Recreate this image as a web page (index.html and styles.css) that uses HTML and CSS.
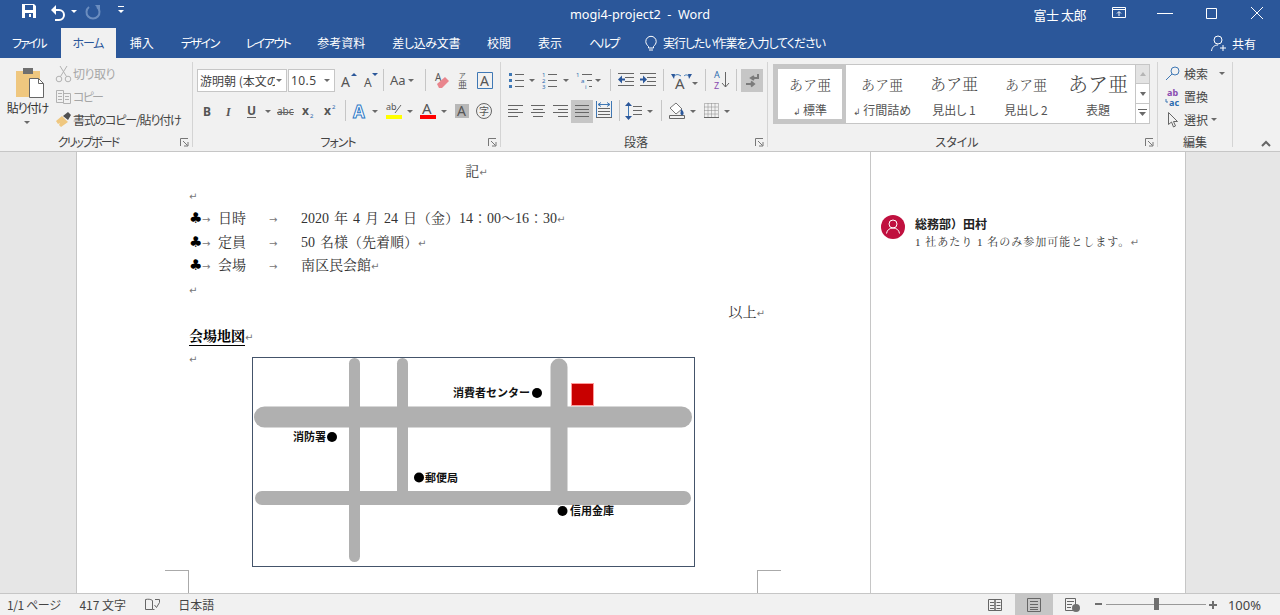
FILE: index.html
```html
<!DOCTYPE html>
<html lang="ja">
<head>
<meta charset="utf-8">
<title>mogi4-project2 - Word</title>
<link rel="stylesheet" href="styles.css">
</head>
<body>
<div class="app">
  <header class="titlebar">
    <div class="qat">
      <svg width="26" height="28"><path class="w-fill" d="M6 5h12l2 2v12H6z"/><rect class="blue-fill" x="9" y="6" width="8" height="5"/><rect class="blue-fill" x="9" y="14" width="8" height="5"/><rect class="w-fill" x="13" y="15" width="2" height="3"/></svg>
      <svg width="38" height="28"><path class="w-line thick" d="M11 11h6a4.500 4.500 0 0 1 0 10h-4"/><path class="w-fill" d="M9 11l5-5v10z"/><path class="w-fill" d="M29 11h6l-3 3z"/></svg>
      <svg width="32" height="28"><path class="dim-line thick" d="M9 8a6.500 6.500 0 1 0 8 0"/><path class="dim-fill" d="M20 6v6l-5-6z"/></svg>
      <svg width="18" height="28"><path class="w-line" d="M6 7.500h6"/><path class="w-fill" d="M6 11h6l-3 3z"/></svg>
    </div>
    <div class="doc-title">mogi4-project2&nbsp; -&nbsp; Word</div>
    <div class="winctl">
      <span class="user">富士 太郎</span>
      <span class="winbtn"><svg width="14" height="12"><path class="w-line" d="M.5.500h13v10H.5zM.5 2.500h13M7 9V5M5 6.500l2-2 2 2"/></svg></span>
      <span class="winbtn"><svg width="16" height="12"><path class="w-line" d="M0 6.500h16"/></svg></span>
      <span class="winbtn"><svg width="12" height="12"><path class="w-line" d="M1.500 1.500h10v10h-10z"/></svg></span>
      <span class="winbtn"><svg width="14" height="14"><path class="w-line" d="M1 1l12 12M13 1L1 13"/></svg></span>
    </div>
  </header>

  <nav class="tabs">
    <span class="tab first k20">ファイル</span>
    <span class="tab active k12">ホーム</span>
    <span class="tab">挿入</span>
    <span class="tab k15">デザイン</span>
    <span class="tab k16">レイアウト</span>
    <span class="tab">参考資料</span>
    <span class="tab k03">差し込み文書</span>
    <span class="tab">校閲</span>
    <span class="tab">表示</span>
    <span class="tab k17">ヘルプ</span>
    <span class="tell">
      <svg width="12" height="17"><path class="w-line" d="M3.500 11.500C2 10 .8 8.500.8 6.500a5.200 5.200 0 0 1 10.400 0c0 2-1.200 3.500-2.700 5v1.500h-5zM4 15h4"/></svg>
      <span class="k10">実行したい作業を入力してください</span>
    </span>
    <span class="share">
      <svg width="16" height="17"><circle class="w-line" cx="7" cy="5" r="4"/><path class="w-line" d="M.5 16c.5-4 3-6 6.500-6M12 10v6M9 13h6"/></svg>
      共有
    </span>
  </nav>

  <section class="ribbon">
    <div class="group g-clip">
      <div class="clip-body">
        <div class="paste">
          <svg width="30" height="31"><rect class="orange" x="1" y="4" width="24" height="26"/><rect class="grey-fill" x="8" y="1" width="10" height="6"/><path class="paper" d="M14.500 11.500h9l5 5v14h-14z"/><path class="grey-line" d="M23.500 11.500v5h5"/></svg>
          <span class="paste-label k10">貼り付け</span>
          <svg width="8" height="8"><path class="arrow" d="M1 2h6l-3 3z"/></svg>
        </div>
        <div class="stack">
          <div class="sm off"><svg width="18" height="18"><circle class="off-line" cx="4" cy="14" r="2.800"/><circle class="off-line" cx="13" cy="14" r="2.800"/><path class="off-line thick" d="M5.500 11.500L12 1M11.500 11.500L5 1"/></svg><span class="k05">切り取り</span></div>
          <div class="sm off"><svg width="18" height="18"><path class="off-line" d="M1.500 2.500h7v12h-7zM8.500 5.500h7v10h-7zM3 5.500h4M3 8.500h4M3 11.500h4M10 8.500h4M10 11.500h4"/></svg><span class="k17">コピー</span></div>
          <div class="sm"><svg width="18" height="18"><path class="orange" d="M1 10l6-5 6 6-7 5-2-2 1-2-2 1z"/><path class="dark-fill" d="M8 5l5-4 3 3-3 5z"/></svg><span class="k11">書式のコピー/貼り付け</span></div>
        </div>
      </div>
      <div class="glabel clip-label"><span class="k19">クリップボード</span><svg class="launch" width="9" height="9"><path class="launch-line" d="M.5 8V.5H8M3 3l4.500 4.500M8 4v4H4"/></svg></div>
    </div>

    <div class="group g-font">
      <div class="rows">
        <div class="row">
          <div class="combo c-name"><span class="combo-text">游明朝 (本文の</span><svg width="8" height="8"><path class="arrow" d="M1 2h6l-3 3z"/></svg></div>
          <div class="combo c-size"><span class="combo-text">10.5</span><svg width="8" height="8"><path class="arrow" d="M1 2h6l-3 3z"/></svg></div>
          <svg width="26" height="23"><text class="t-i" x="6" y="18" font-size="14">A</text><path class="blue-fill" d="M16 7l3-3 3 3z"/></svg>
          <svg width="22" height="23"><text class="t-i" x="3" y="18" font-size="12">A</text><path class="blue-fill" d="M11 4h6l-3 3z"/></svg>
          <i class="sep"></i>
          <svg width="41" height="23"><text class="t-i" x="6" y="16" font-size="13">Aa</text><path class="arrow" d="M24 10h6l-3 3z"/></svg>
          <i class="sep"></i>
          <svg width="28" height="23"><text class="t-i" x="9" y="12" font-size="10">A</text><path class="pink" d="M11 15l8-7 4 4-7 7h-3z"/></svg>
          <svg width="17" height="23"><text class="t-i" x="5" y="9" font-size="7">ア</text><text class="t-i" x="4" y="19" font-size="9">亜</text></svg>
          <svg width="28" height="23"><path class="blue-line" d="M6.500 3.500h15v16h-15z"/><text class="t-i" x="9" y="17" font-size="14">A</text></svg>
        </div>
        <div class="row r2">
          <svg width="21" height="23"><text class="t-b" x="6" y="16" font-size="12">B</text></svg>
          <svg width="22" height="23"><text class="t-it" x="8" y="16" font-size="12">I</text></svg>
          <svg width="36" height="23"><text class="t-b" x="7" y="15" font-size="12">U</text><path class="grey-line" d="M7 17.500h9"/><path class="arrow" d="M25 10h6l-3 3z"/></svg>
          <svg width="21" height="23"><text class="t-i" x="1" y="15" font-size="10">abc</text><path class="grey-line" d="M1 12.500h17"/></svg>
          <svg width="21" height="23"><text class="t-b" x="5" y="15" font-size="12">x</text><text class="t-blue" x="13" y="18" font-size="6">2</text></svg>
          <svg width="22" height="23"><text class="t-b" x="6" y="15" font-size="12">x</text><text class="t-blue" x="14" y="9" font-size="6">2</text></svg>
          <i class="gap5"></i><i class="sep"></i>
          <svg width="37" height="23"><text class="t-glow" x="7" y="18" font-size="17">A</text><path class="arrow" d="M26 10h6l-3 3z"/></svg>
          <svg width="37" height="23"><text class="t-i" x="3" y="10" font-size="9">ab</text><path class="grey-line thick" d="M12 13l6-8"/><rect class="yellow" x="3" y="15" width="16" height="4"/><path class="arrow" d="M24 10h6l-3 3z"/></svg>
          <svg width="32" height="23"><text class="t-i" x="2" y="14" font-size="15">A</text><rect class="red" x="0" y="15" width="16" height="4"/><path class="arrow" d="M21 10h6l-3 3z"/></svg>
          <svg width="21" height="23"><rect class="grey-box" x="3" y="4" width="14" height="14"/><text class="t-i" x="5" y="16" font-size="14">A</text></svg>
          <svg width="24" height="23"><circle class="grey-line" cx="11" cy="11" r="7.500"/><text class="t-i" x="6" y="15" font-size="10">字</text></svg>
        </div>
      </div>
      <div class="glabel font-label"><span class="k10">フォント</span><svg class="launch" width="9" height="9"><path class="launch-line" d="M.5 8V.5H8M3 3l4.500 4.500M8 4v4H4"/></svg></div>
    </div>

    <div class="group g-para">
      <div class="rows">
        <div class="row">
          <svg width="34" height="23"><path class="blue-dot" d="M4 4h3v3H4zM4 10h3v3H4zM4 16h3v3H4z"/><path class="grey-line" d="M10 5.500h9M10 11.500h9M10 17.500h9"/><path class="arrow" d="M24 10h6l-3 3z"/></svg>
          <svg width="34" height="23"><text class="t-blue" x="3" y="8" font-size="6">1</text><text class="t-blue" x="3" y="14" font-size="6">2</text><text class="t-blue" x="3" y="20" font-size="6">3</text><path class="grey-line" d="M9 5.500h9M9 11.500h9M9 17.500h9"/><path class="arrow" d="M24 10h6l-3 3z"/></svg>
          <svg width="33" height="23"><text class="t-blue" x="3" y="8" font-size="6">1</text><text class="t-blue" x="8" y="14" font-size="6">a</text><text class="t-blue" x="12" y="20" font-size="6">i</text><path class="grey-line" d="M9 5.500h10M14 11.500h5M16 17.500h3"/><path class="arrow" d="M22 10h6l-3 3z"/></svg>
          <i class="gap4"></i><i class="sep"></i>
          <svg width="26" height="23"><path class="grey-line" d="M7 4.500h16M14 8.500h9M14 12.500h9M7 16.500h16"/><path class="blue-fill" d="M7 10.500l4-4v3h3v2h-3v3z"/></svg>
          <svg width="26" height="23"><path class="grey-line" d="M3 4.500h16M10 8.500h9M10 12.500h9M3 16.500h16"/><path class="blue-fill" d="M10 10.500l-4-4v3H3v2h3v3z"/></svg>
          <i class="sep"></i>
          <svg width="41" height="23"><text class="t-i" x="11" y="20" font-size="15">A</text><path class="blue-line thick" d="M9 8c3-3 5-3 8-1M20 7c2-2 4-1 6 1"/><path class="blue-fill" d="M7 5l4 0-1 5zM28 5l-4 0 1 5z"/><path class="arrow" d="M28 13h6l-3 3z"/></svg>
          <i class="sep"></i>
          <svg width="30" height="23"><text class="t-blue" x="8" y="9" font-size="9">A</text><text class="t-purple" x="8" y="20" font-size="9">Z</text><path class="grey-line thick" d="M19.500 3v15M16 14l3.500 4 3.500-4"/></svg>
          <i class="sep"></i><i class="gap4"></i>
          <svg class="selected" width="22" height="23"><path class="mute-line thick" d="M17 5v4h-6M13 7l-3 2 3 2M5 15h7M10 12.500l3 2.500-3 2.500"/></svg>
        </div>
        <div class="row r2">
          <svg width="22" height="23"><path class="grey-line" d="M3 5.500h15M3 9.500h10M3 12.500h15M3 16.500h10"/></svg>
          <svg width="22" height="23"><path class="grey-line" d="M4 5.500h14M6 9.500h10M4 12.500h14M6 16.500h10"/></svg>
          <svg width="22" height="23"><path class="grey-line" d="M4 5.500h15M9 9.500h10M4 12.500h15M9 16.500h10"/></svg>
          <svg class="selected" width="22" height="23"><path class="grey-line" d="M4 5.500h14M4 9.500h14M4 12.500h14M4 16.500h14"/></svg>
          <svg width="26" height="23"><path class="blue-line" d="M3.500 1v17M18.500 1v17M5 4.500h12M5 4.500l3-2M5 4.500l3 2M17 4.500l-3-2M17 4.500l-3 2"/><path class="grey-line" d="M5 8.500h12M5 11.500h12M5 14.500h12M3 17.500h16"/></svg>
          <i class="sep"></i>
          <svg width="41" height="23"><path class="blue-line thick" d="M8.500 3v16"/><path class="blue-fill" d="M5 6l3.500-4L12 6zM5 16l3.500 4 3.500-4z"/><path class="grey-line" d="M13 6.500h9M13 10.500h9M13 14.500h9"/><path class="arrow" d="M27 10h6l-3 3z"/></svg>
          <i class="sep"></i>
          <svg width="38" height="23"><path class="paper-grey" d="M8 8l6-5 6 6-6 5z"/><path class="blue-fill" d="M19 9c2 2 3 3 2.500 5s-3.500 1-3-1z"/><path class="grey-line" d="M7.500 15.500h15v3h-15z"/><path class="arrow" d="M28 10h6l-3 3z"/></svg>
          <svg width="35" height="23"><path class="dot-line" d="M4.500 3.500h14v14h-14zM4.500 10.500h14M11.500 3.500v14M4.500 7h14M4.500 14h14M8 3.500v14M15 3.500v14"/><path class="grey-line" d="M4 17.500h15"/><path class="arrow" d="M24 10h6l-3 3z"/></svg>
        </div>
      </div>
      <div class="glabel">段落<svg class="launch" width="9" height="9"><path class="launch-line" d="M.5 8V.5H8M3 3l4.500 4.500M8 4v4H4"/></svg></div>
    </div>

    <div class="group g-style">
      <div class="gallery">
        <div class="style-item current"><span class="sample s14">あア亜</span><span class="style-name"><b class="mark-s">↲</b> 標準</span></div>
        <div class="style-item"><span class="sample s14">あア亜</span><span class="style-name"><b class="mark-s">↲</b> 行間詰め</span></div>
        <div class="style-item"><span class="sample s16">あア亜</span><span class="style-name">見出し 1</span></div>
        <div class="style-item"><span class="sample s14">あア亜</span><span class="style-name">見出し 2</span></div>
        <div class="style-item"><span class="sample s21">あア亜</span><span class="style-name">表題</span></div>
        <div class="scroll">
          <span class="sc sc-up"><svg width="8" height="6"><path class="mute-fill" d="M1 5h6L4 1z"/></svg></span>
          <span class="sc"><svg width="8" height="6"><path class="arrow" d="M1 1h6L4 5z"/></svg></span>
          <span class="sc sc-last"><svg width="9" height="8"><path class="grey-line" d="M0 .5h9"/><path class="arrow" d="M1 3h7L4.500 7z"/></svg></span>
        </div>
      </div>
      <div class="glabel style-label">スタイル<svg class="launch" width="9" height="9"><path class="launch-line" d="M.5 8V.5H8M3 3l4.500 4.500M8 4v4H4"/></svg></div>
    </div>

    <div class="group g-edit">
      <div class="stack edit">
        <div class="sm"><svg width="18" height="18"><circle class="blue-line thick" cx="9" cy="6" r="4"/><path class="blue-line wide" d="M6 9l-6 6"/></svg>検索<svg class="ar" width="8" height="8"><path class="arrow" d="M1 2h6l-3 3z"/></svg></div>
        <div class="sm"><svg width="18" height="18"><text class="t-purple b" x="1" y="8" font-size="9">ab</text><text class="t-blue b" x="3" y="18" font-size="9">ac</text><path class="blue-line" d="M0 11v3h2"/></svg>置換</div>
        <div class="sm"><svg width="18" height="18"><path class="grey-line" d="M2.500 1.500v12l3-2.500 2 5 2-1-2-4.500h4z"/></svg>選択<svg class="ar small" width="8" height="8"><path class="arrow" d="M1 2h6l-3 3z"/></svg></div>
      </div>
      <div class="glabel">編集</div>
    </div>

    <svg class="collapse" width="12" height="8"><path class="caret" d="M2 6l4-4 4 4"/></svg>
  </section>

  <main class="workspace">
    <div class="side side-l"></div>
    <article class="page">
      <p class="line center">記<span class="mark">↵</span></p>
      <p class="line"><span class="mark">↵</span></p>
      <p class="line shifted"><span class="bul">♣</span><span class="tabmark tm1">→</span><span class="lab">日時<span class="tabmark tm2">→</span></span>2020 年 4 月 24 日（金）14：00〜16：30<span class="mark">↵</span></p>
      <p class="line"><span class="bul">♣</span><span class="tabmark tm1">→</span><span class="lab">定員<span class="tabmark tm2">→</span></span>50 名様（先着順）<span class="mark">↵</span></p>
      <p class="line"><span class="bul">♣</span><span class="tabmark tm1">→</span><span class="lab">会場<span class="tabmark tm2">→</span></span>南区民会館<span class="mark">↵</span></p>
      <p class="line"><span class="mark">↵</span></p>
      <p class="line right">以上<span class="mark">↵</span></p>
      <p class="line"><span class="heading">会場地図</span><span class="mark">↵</span></p>
      <div class="map-row">
        <span class="mark map-mark">↵</span>
        <svg class="map" width="443" height="210" viewBox="252 357 443 210">
          <rect class="map-frame" x="252.500" y="357.500" width="442" height="209"/>
          <g class="road">
            <path class="r11" d="M354.500 363.500v193"/>
            <path class="r11" d="M402.500 363.500v130"/>
            <path class="r17" d="M559 367v130"/>
            <path class="r21" d="M264.500 417h417"/>
            <path class="r14" d="M262 498h422"/>
          </g>
          <rect class="pin" x="571.500" y="383.500" width="22" height="22"/>
          <text class="m-t" x="453" y="397">消費者センター</text>
          <circle cx="537" cy="393" r="5"/>
          <text class="m-t" x="293" y="441">消防署</text>
          <circle cx="332" cy="437" r="5"/>
          <circle cx="419" cy="477.500" r="5"/>
          <text class="m-t" x="425" y="482">郵便局</text>
          <circle cx="562.500" cy="511" r="5"/>
          <text class="m-t" x="570" y="515">信用金庫</text>
        </svg>
      </div>
      <div class="crops"><i class="crop crop-l"></i><i class="crop crop-r"></i></div>
    </article>
    <aside class="comments">
      <div class="comment">
        <svg class="avatar" width="24" height="24"><circle class="av-bg" cx="12" cy="12" r="12"/><circle class="w-line" cx="12" cy="9" r="4"/><path class="w-line" d="M5.500 18.500c.5-3.500 3-5.500 6.500-5.500s6 2 6.500 5.500"/></svg>
        <div class="c-body">
          <div class="c-name-t">総務部）田村</div>
          <div class="c-text">1 社あたり 1 名のみ参加可能とします。<span class="mark">↵</span></div>
        </div>
      </div>
    </aside>
    <div class="side side-r"></div>
  </main>

  <footer class="status">
    <span class="st st-page">1/1 ページ</span>
    <span class="st st-count">417 文字</span>
    <svg class="st-proof" width="15" height="14"><path class="grey-line" d="M7.500 2.500C5.500 1 3 1 .5 1.500v10h7zM7.500 11.500h2M10 1.500h4.500v3M9.500 7l2 2.500 3-5"/></svg>
    <span class="st st-lang">日本語</span>
    <div class="st-right">
      <svg class="v1" width="14" height="14"><path class="grey-line" d="M.5 1.500h6.500v11H.5zM7 1.500h6.500v11H7zM2 4.500h4M2 7.500h4M2 10.500h4M8.500 4.500h4M8.500 7.500h4M8.500 10.500h4"/></svg>
      <span class="view-on"><svg width="14" height="14"><path class="grey-line" d="M.5 .5h13v13H.5zM3 3.500h8M3 6.500h8M3 9.500h8M3 11.500h8"/></svg></span>
      <svg class="v3" width="15" height="14"><path class="grey-line" d="M.5.500h10v12H.5zM2 3.500h7M2 6.500h5M2 9.500h4"/><circle class="grey-fill" cx="11" cy="10" r="4"/></svg>
      <div class="zoom">
        <svg width="7" height="3"><rect class="grey-fill" width="7" height="2" y="0"/></svg>
        <div class="slider"><i class="thumb"></i></div>
        <svg width="8" height="8"><path class="grey-fill" d="M3 0h2v3h3v2H5v3H3V5H0V3h3z"/></svg>
      </div>
      <span class="st st-zoom">100%</span>
    </div>
  </footer>
</div>
</body>
</html>
```

FILE: styles.css
```css
* { box-sizing: border-box; }
html, body { margin: 0; padding: 0; height: 100%; overflow: hidden; }
body {
  font-family: "Noto Sans CJK JP", "Noto Sans", sans-serif;
  font-size: 12px;
  color: #444;
  font-feature-settings: "palt";
}
svg { display: block; flex: none; overflow: visible; }
i { display: block; font-style: normal; }
p { margin: 0; }

.k03 { letter-spacing: -.33px; }
.k05 { letter-spacing: -.5px; }
.k10 { letter-spacing: -1.060px; }
.k11 { letter-spacing: -1.150px; }
.k12 { letter-spacing: -1.200px; }
.k15 { letter-spacing: -1.500px; }
.k16 { letter-spacing: -1.600px; }
.k17 { letter-spacing: -1.700px; }
.k19 { letter-spacing: -1.900px; }
.k20 { letter-spacing: -2px; }

.app { width: 1280px; height: 615px; display: flex; flex-direction: column; }

/* title */
.titlebar {
  height: 28px; background: #2b579a; color: #fff;
  display: grid; grid-template-columns: 1fr auto 1fr; align-items: center;
}
.qat { display: flex; padding-left: 16px; margin-top: -2px; }
.doc-title { font-family: "Noto Sans", sans-serif; font-size: 12.7px; line-height: 22px; }
.winctl { display: flex; justify-content: flex-end; align-items: center; height: 28px; }
.user { margin-right: 10px; font-size: 13px; letter-spacing: -.5px; }
.winbtn { width: 46px; height: 28px; display: flex; align-items: center; justify-content: center; margin-top: -3px; }

/* svg paints */
.w-fill { fill: #fff; }
.w-line { fill: none; stroke: #fff; stroke-width: 1; }
.blue-fill { fill: #2b579a; }
.blue-dot { fill: #3f78b5; }
.dim-line { fill: none; stroke: #6b8dbf; }
.dim-fill { fill: #6b8dbf; }
.thick { stroke-width: 2; }
.wide { stroke-width: 3; }
.arrow { fill: #6a6a6a; }
.orange { fill: #efc77f; }
.grey-fill { fill: #6f6f6f; }
.dark-fill { fill: #505050; }
.grey-line { fill: none; stroke: #666; stroke-width: 1; }
.blue-line { fill: none; stroke: #3f78b5; stroke-width: 1; }
.off-line { fill: none; stroke: #b2b2b2; stroke-width: 1; }
.paper { fill: #fff; stroke: #666; }
.paper-grey { fill: #fff; stroke: #777; }
.launch-line { fill: none; stroke: #777; stroke-width: 1; }
.pink { fill: #e9858d; }
.yellow { fill: #ffff00; }
.red { fill: #ff0000; }
.grey-box { fill: #b8b8b8; }
.mute-line { fill: none; stroke: #7b7b7b; }
.mute-fill { fill: #b5b5b5; }
.dot-line { fill: none; stroke: #888; stroke-width: 1; stroke-dasharray: 1 1; }
.caret { fill: none; stroke: #666; stroke-width: 2; }
.t-i { fill: #555; font-family: "Noto Sans", "Noto Sans CJK JP", sans-serif; }
.t-b { fill: #555; font-weight: 700; font-family: "Noto Sans", sans-serif; }
.t-it { fill: #555; font-weight: 700; font-style: italic; font-family: "Liberation Serif", serif; }
.t-blue { fill: #2b6cb0; font-family: "Noto Sans", sans-serif; }
.t-purple { fill: #8a4bb0; font-family: "Noto Sans", sans-serif; }
.b { font-weight: 700; }
.t-glow { fill: #fff; stroke: #2f7ac6; stroke-width: 1; font-family: "Noto Sans", sans-serif; font-weight: 700; }

/* tabs */
.tabs { height: 30px; background: #2b579a; color: #fff; display: flex; align-items: center; }
.tab { height: 30px; line-height: 30px; padding: 0 13.500px; }
.tab.first { padding: 0 15px 0 12px; }
.tab.active { background: #f1f1f1; color: #2b579a; padding: 0 13px 0 12px; }
.tell { display: flex; align-items: center; gap: 6px; margin-left: 13px; line-height: 30px; }
.share { margin-left: auto; display: flex; align-items: center; gap: 5px; padding-right: 24px; }

/* ribbon */
.ribbon {
  height: 94px; background: #f1f1f1; border-bottom: 1px solid #c6c6c6;
  display: flex; align-items: flex-start; padding-top: 4px;
}
.group {
  height: 85px; border-right: 1px solid #d4d4d4;
  display: flex; flex-direction: column; flex: none;
}
.g-clip { width: 193px; }
.g-font { width: 308px; padding-left: 4px; }
.g-para { width: 267px; padding-left: 4px; }
.g-style { width: 390px; padding-left: 5px; }
.g-edit { width: 75px; }
.glabel {
  margin-top: auto; margin-bottom: -2px; height: 14px; line-height: 14px;
  text-align: center; position: relative; font-size: 12px; color: #444;
}
.launch { position: absolute; right: 3px; top: 3px; }
.clip-label { padding-right: 16px; }
.font-label { padding-right: 21px; }
.style-label { padding-right: 16px; }

.clip-body { display: flex; }
.paste { width: 54px; display: flex; flex-direction: column; align-items: center; padding-top: 5px; }
.paste svg:first-child { margin-left: 5px; }
.paste-label { line-height: 14px; margin: 3px 0 0 1px; font-size: 12px; color: #333; }
.paste svg:last-child { margin-top: 4px; }
.stack { display: flex; flex-direction: column; }
.sm { height: 23px; display: flex; align-items: center; padding-left: 1px; white-space: nowrap; color: #444; }
.off { color: #a6a6a6; }

.rows { padding-top: 7px; display: flex; flex-direction: column; gap: 8px; }
.row { display: flex; height: 23px; align-items: flex-start; }
.sep { width: 1px; height: 22px; background: #c6c6c6; flex: none; }
.r2 .sep { height: 21px; }
.gap5 { width: 5px; flex: none; }
.gap4 { width: 4px; flex: none; }
.selected { background: #c6c6c6; }

.combo {
  height: 23px; background: #fff; border: 1px solid #c6c6c6;
  display: flex; align-items: center; padding: 0 3px 0 2px; flex: none;
}
.c-name { width: 90px; margin-right: 1px; }
.c-size { width: 47px; }
.combo-text { flex: 1; overflow: hidden; white-space: nowrap; font-size: 12px; color: #444; }
.c-size .combo-text { font-size: 12px; letter-spacing: .4px; font-family: "Noto Sans", sans-serif; }

/* styles */
.gallery {
  width: 377px; height: 60px; margin-top: 2px; background: #fff;
  border: 1px solid #c6c6c6; display: flex;
}
.style-item { width: 72px; flex: none; display: flex; flex-direction: column; align-items: center; padding-top: 5px; }
.style-item.current { width: 72px; border: 4px solid #c6c6c6; padding-top: 1px; }
.sample {
  height: 28px; line-height: 28px; color: #444; font-feature-settings: normal;
  font-family: "Noto Serif CJK JP", "Noto Sans CJK JP", serif; font-weight: 300; white-space: nowrap;
}
.s14 { font-size: 14px; }
.s16 { font-size: 16px; }
.s21 { font-size: 20px; }
.style-name { line-height: 16px; margin-top: 4px; font-size: 12px; color: #555; white-space: nowrap; }
.mark-s { font-weight: 400; font-family: "DejaVu Sans", sans-serif; font-size: 9px; }
.scroll { margin-left: auto; width: 14px; flex: none; display: flex; flex-direction: column; border-left: 1px solid #c6c6c6; }
.sc { height: 20px; display: flex; align-items: center; justify-content: center; border-bottom: 1px solid #c6c6c6; }
.sc-up { background: #e3e3e3; }
.sc-last { border-bottom: 0; }

.edit { padding-left: 7px; }
.edit .sm svg:first-child { width: 18px; }
.ar { margin-left: 10px; }
.ar.small { margin-left: 2px; }
.collapse { margin: 78px 0 0 27px; }

/* doc */
.workspace { flex: 1; display: flex; min-height: 0; }
.side { background: #e6e6e6; flex: none; }
.side-l { width: 77px; border-right: 1px solid #c6c6c6; }
.side-r { width: 95px; border-left: 1px solid #c6c6c6; }
.page {
  width: 793px; background: #fff; padding: 8px 113px 0 112px; overflow: hidden; flex: none;
  font-family: "Liberation Serif", "Noto Serif CJK JP", "Noto Sans CJK JP", serif;
  font-size: 14px; color: #333; font-feature-settings: normal; word-spacing: 1.500px;
}
.line { height: 23.500px; line-height: 23.500px; white-space: nowrap; }
.center { text-align: center; padding-left: 7px; }
.right { text-align: right; margin-right: -8px; }
.mark { color: #777; font-family: "DejaVu Sans", sans-serif; font-size: 10px; }
.bul { display: inline-block; width: 13px; font-family: "DejaVu Sans", sans-serif; color: #000; font-size: 15px; }
.tabmark { color: #777; font-family: "DejaVu Sans", sans-serif; font-size: 10px; display: inline-block; }
.tm1 { width: 16px; }
.lab { display: inline-block; width: 83px; }
.tm2 { margin-left: 23px; }
.heading { font-weight: 700; color: #000; border-bottom: 1px solid #000; padding-bottom: 1px; }
.map-row { display: flex; height: 219px; }
.map-mark { width: 63px; line-height: 23.500px; flex: none; }
.map { margin-top: 8.500px; }
.map-frame { fill: #fff; stroke: #44546a; stroke-width: 1; }
.road path { fill: none; stroke: #b0b0b0; stroke-linecap: round; }
.r11 { stroke-width: 11; }
.r17 { stroke-width: 17; }
.r21 { stroke-width: 21; }
.r14 { stroke-width: 14; }
.pin { fill: #c80000; stroke: #ff9a9a; stroke-width: 1; }
.m-t { font-family: "Noto Sans CJK JP", sans-serif; font-size: 11px; font-weight: 700; fill: #111; font-feature-settings: normal; }
.crops { display: flex; justify-content: space-between; margin: 3px -24px 0; }
.crop { width: 24px; height: 24px; border-top: 1px solid #aaa; }
.crop-l { border-right: 1px solid #aaa; }
.crop-r { border-left: 1px solid #aaa; }

.comments { width: 315px; flex: none; background: #fff; border-left: 1px solid #c6c6c6; padding: 63px 0 0 10px; }
.comment { display: flex; gap: 10px; }
.av-bg { fill: #c0103f; }
.avatar { flex: none; }
.c-body { margin-top: -1px; }
.c-name-t { font-size: 12px; font-weight: 700; line-height: 19px; color: #222; font-feature-settings: normal; }
.c-text { font-family: "Liberation Serif", "Noto Serif CJK JP", "Noto Sans CJK JP", serif; font-size: 11px; line-height: 19px; color: #333; font-feature-settings: normal; letter-spacing: 1px; }

/* status */
.status {
  height: 22px; background: #f1f1f1; border-top: 1px solid #c6c6c6; color: #444;
  display: flex; align-items: center; flex: none; font-size: 12px;
}
.st-page { margin-left: 7px; letter-spacing: -.4px; }
.st-count { margin-left: 19px; }
.st-proof { margin-left: 19px; }
.st-lang { margin-left: 18px; }
.st-right { margin-left: auto; display: flex; align-items: center; height: 21px; }
.view-on { width: 38px; height: 21px; background: #c6c6c6; display: flex; align-items: center; justify-content: center; margin-left: 13px; }
.v3 { margin-left: 12px; }
.zoom { display: flex; align-items: center; margin-left: 15px; }
.slider { width: 100px; height: 1px; background: #999; margin: 0 3px 0 4px; position: relative; }
.thumb { position: absolute; left: 48px; top: -6px; width: 5px; height: 12px; background: #6f6f6f; }
.st-zoom { margin: 0 19px 0 11px; font-family: "Noto Sans", sans-serif; font-size: 13px; }
```
